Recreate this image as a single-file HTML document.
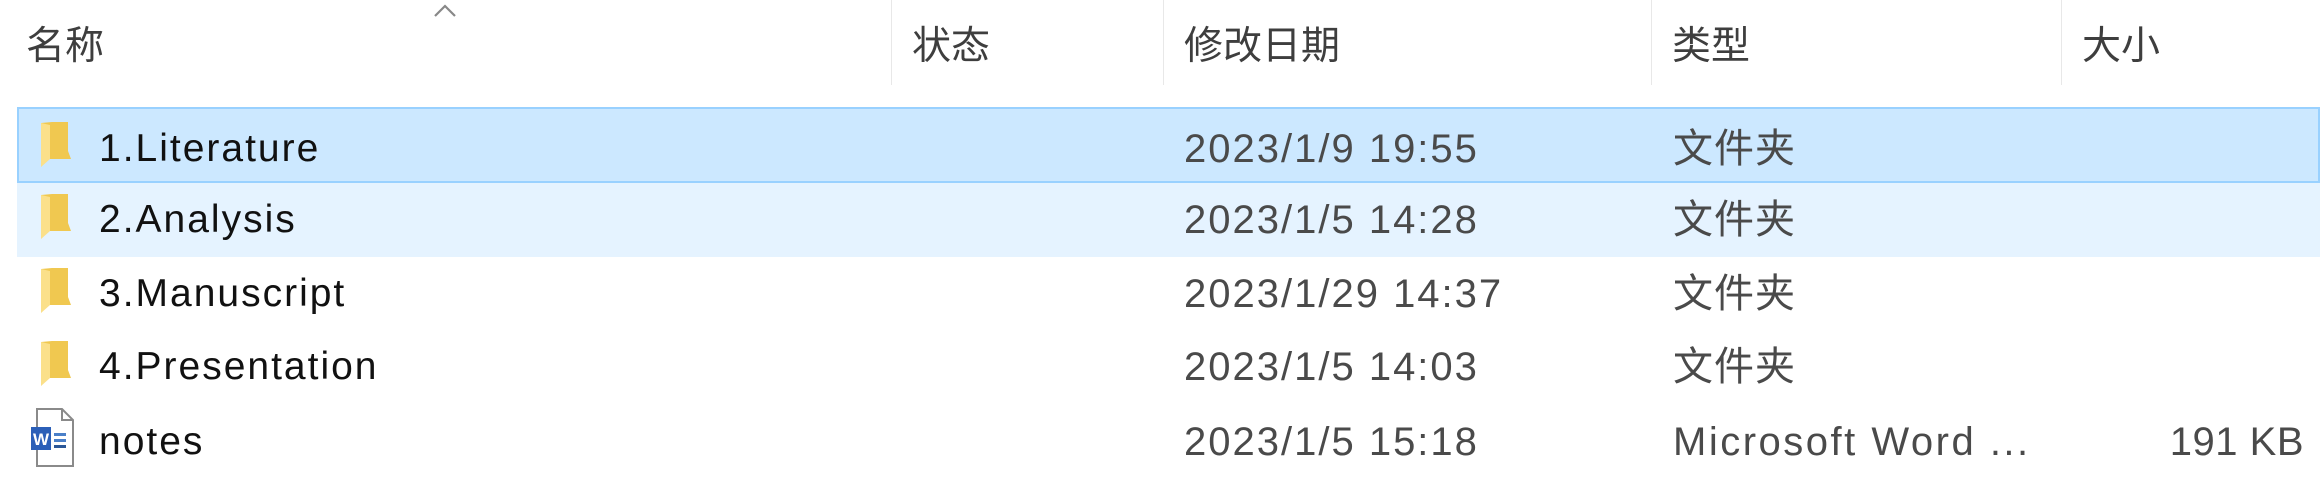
<!DOCTYPE html>
<html><head><meta charset="utf-8"><style>
*{margin:0;padding:0;box-sizing:border-box}
body{width:2322px;height:472px;background:#fff;position:relative;overflow:hidden;font-family:"Liberation Sans","Noto Sans CJK SC",sans-serif}
.h{position:absolute;top:23px;font-size:39px;color:#3e3e3e;line-height:48px}
.sep{position:absolute;top:0;height:85px;width:1px;background:#e8e8e8}
.row{position:absolute;left:17px;width:2303px;height:74px}
.t{position:absolute;font-size:39px;line-height:44px;white-space:nowrap}
.name{left:82px;color:#111;letter-spacing:2px}
.date{left:1167px;color:#4a4a4a;font-size:40px;letter-spacing:2px}
.type{left:1656px;color:#4a4a4a;font-size:40px;letter-spacing:1px}
.ic{position:absolute;left:21px;top:14px}
</style></head><body>
<div class="h" style="left:26px">名称</div>
<svg style="position:absolute;left:432px;top:2px" width="26" height="16"><path d="M3 14 L13 4 L23 14" fill="none" stroke="#888" stroke-width="2.2"/></svg>
<div class="sep" style="left:891px"></div>
<div class="h" style="left:912px">状态</div>
<div class="sep" style="left:1163px"></div>
<div class="h" style="left:1184px">修改日期</div>
<div class="sep" style="left:1651px"></div>
<div class="h" style="left:1672px">类型</div>
<div class="sep" style="left:2061px"></div>
<div class="h" style="left:2082px">大小</div>

<div class="row" style="top:107px;height:76px;background:#cce8ff;border:2px solid #99d1ff"></div>
<div class="row" style="top:183px;background:#e5f3ff"></div>

<div class="row" style="top:107px">
 <svg class="ic" width="34" height="48" viewBox="0 0 34 48"><path d="M3 2 L14 1 L30 1 L30 30 L33 38 L5 38 L3 46 Z" fill="#f0c850"/><path d="M3 2 L12 4 L12 38 L3 46 Z" fill="#fbe08a"/></svg>
 <div class="t name" style="top:20px">1.Literature</div>
 <div class="t date" style="top:20px">2023/1/9 19:55</div>
 <div class="t type" style="top:20px">文件夹</div>
</div>
<div class="row" style="top:183px">
 <svg class="ic" style="top:10px" width="34" height="48" viewBox="0 0 34 48"><path d="M3 2 L14 1 L30 1 L30 30 L33 38 L5 38 L3 46 Z" fill="#f0c850"/><path d="M3 2 L12 4 L12 38 L3 46 Z" fill="#fbe08a"/></svg>
 <div class="t name" style="top:15px">2.Analysis</div>
 <div class="t date" style="top:15px">2023/1/5 14:28</div>
 <div class="t type" style="top:15px">文件夹</div>
</div>
<div class="row" style="top:257px">
 <svg class="ic" style="top:10px" width="34" height="48" viewBox="0 0 34 48"><path d="M3 2 L14 1 L30 1 L30 30 L33 38 L5 38 L3 46 Z" fill="#f0c850"/><path d="M3 2 L12 4 L12 38 L3 46 Z" fill="#fbe08a"/></svg>
 <div class="t name" style="top:15px">3.Manuscript</div>
 <div class="t date" style="top:15px">2023/1/29 14:37</div>
 <div class="t type" style="top:15px">文件夹</div>
</div>
<div class="row" style="top:330px">
 <svg class="ic" style="top:10px" width="34" height="48" viewBox="0 0 34 48"><path d="M3 2 L14 1 L30 1 L30 30 L33 38 L5 38 L3 46 Z" fill="#f0c850"/><path d="M3 2 L12 4 L12 38 L3 46 Z" fill="#fbe08a"/></svg>
 <div class="t name" style="top:15px">4.Presentation</div>
 <div class="t date" style="top:15px">2023/1/5 14:03</div>
 <div class="t type" style="top:15px">文件夹</div>
</div>
<div class="row" style="top:403px">
 <svg style="position:absolute;left:13px;top:4px" width="46" height="62" viewBox="0 0 46 62"><path d="M7 2 L32 2 L43 13 L43 59 L7 59 Z" fill="#fff" stroke="#8a8a8a" stroke-width="2"/><path d="M32 2 L32 13 L43 13" fill="none" stroke="#8a8a8a" stroke-width="2"/><rect x="24" y="26" width="12" height="3" fill="#4a7fc8"/><rect x="24" y="32" width="12" height="3" fill="#4a7fc8"/><rect x="24" y="38" width="12" height="3" fill="#2b5797"/><rect x="1" y="20" width="20" height="23" fill="#2b5fb8"/><text x="11" y="38" font-size="17" font-weight="bold" fill="#fff" text-anchor="middle" font-family="Liberation Sans,sans-serif">W</text></svg>
 <div class="t name" style="top:17px">notes</div>
 <div class="t date" style="top:17px">2023/1/5 15:18</div>
 <div class="t type" style="top:17px;letter-spacing:2.5px">Microsoft Word ...</div>
 <div class="t" style="right:16px;top:17px;color:#4a4a4a;font-size:40px;letter-spacing:0.5px">191 KB</div>
</div>
</body></html>
